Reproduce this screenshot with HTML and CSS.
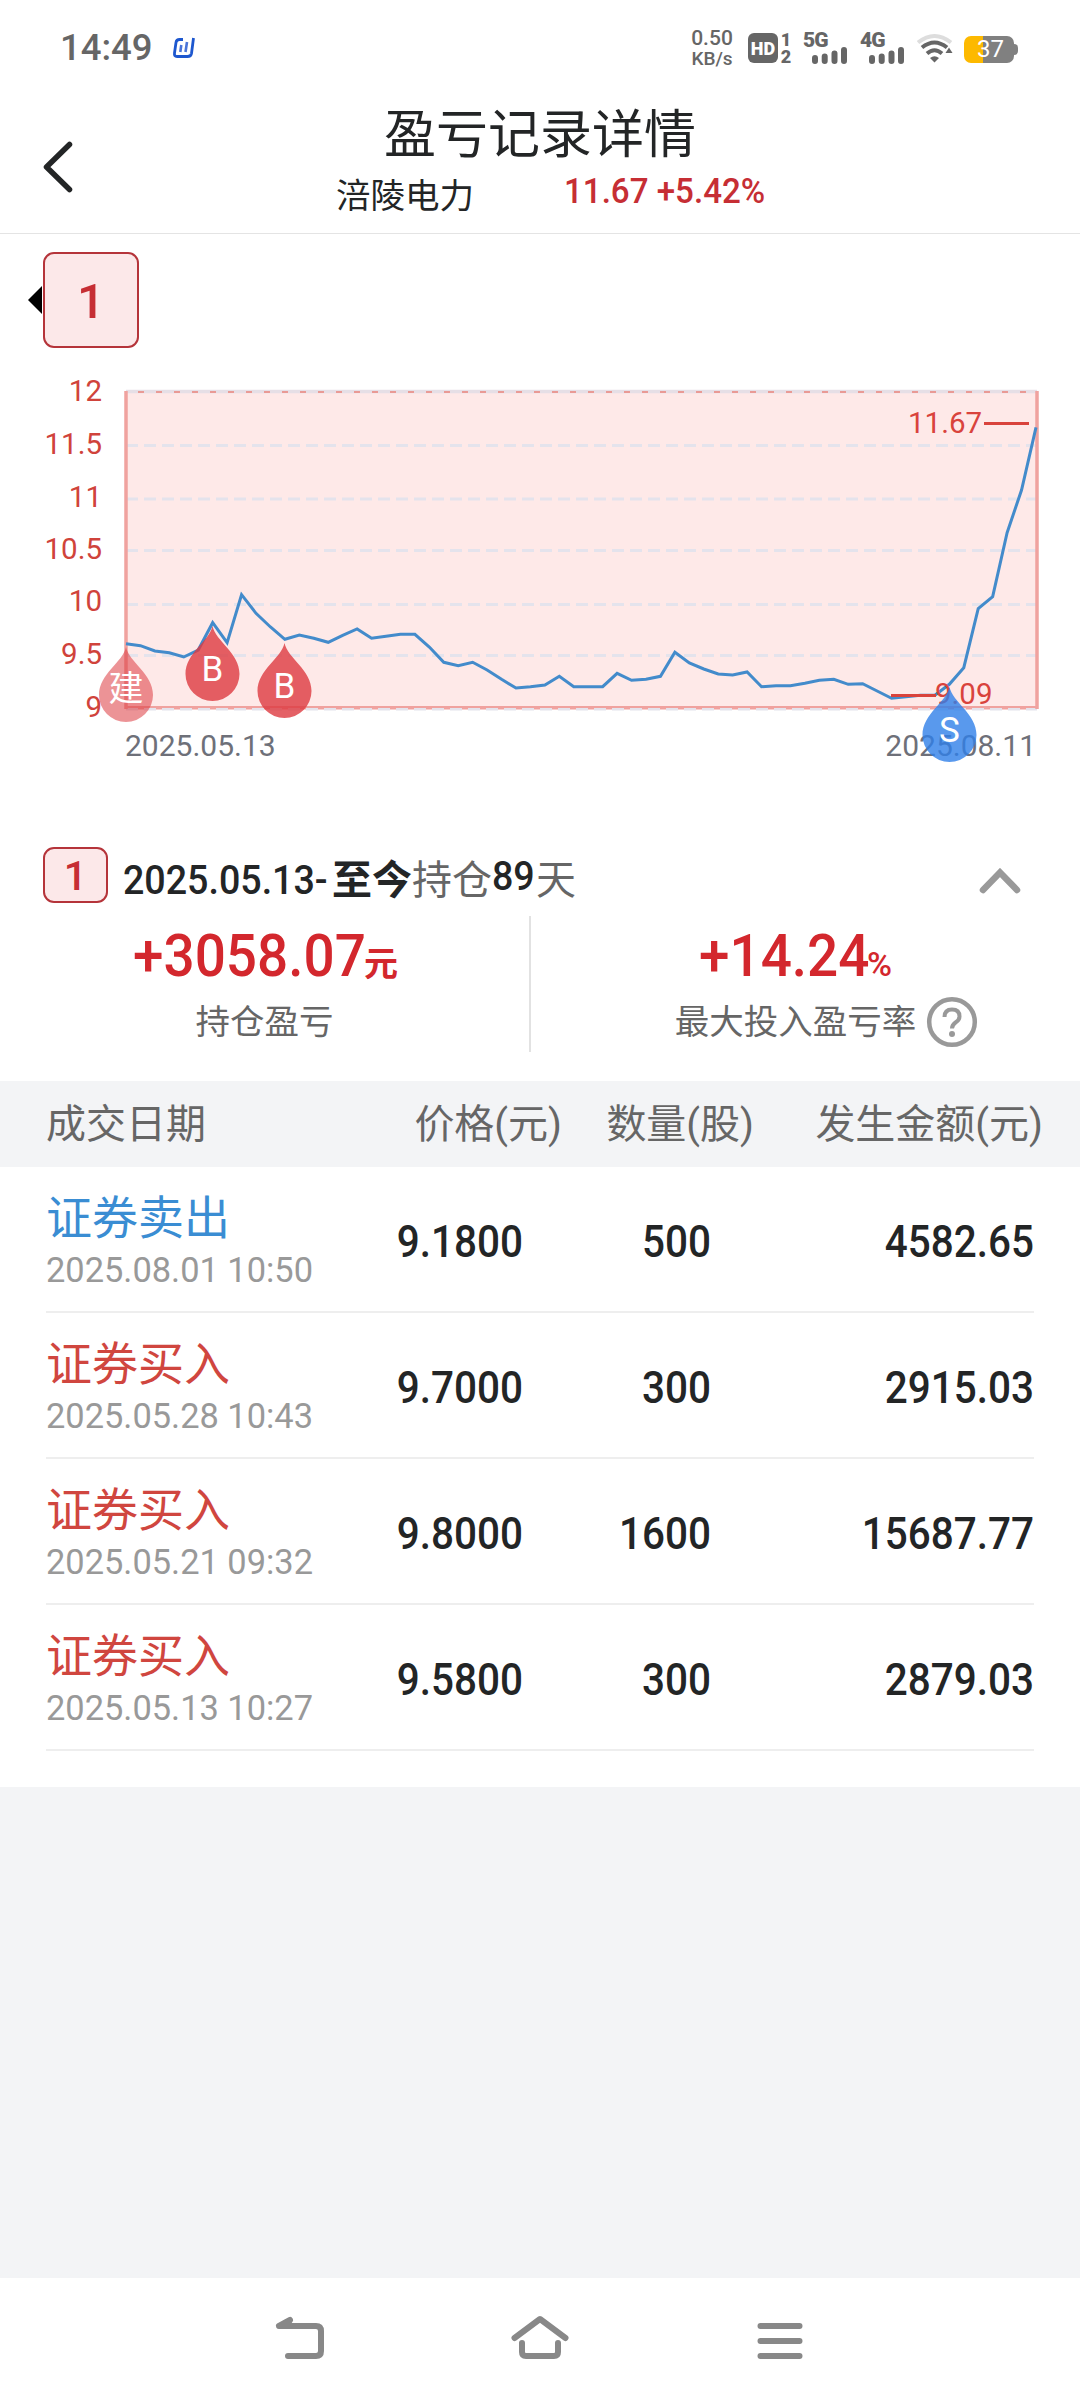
FILE: index.html
```
<!DOCTYPE html>
<html lang="zh-CN">

<head>
  <meta charset="UTF-8">
  <meta name="viewport" content="width=device-width, initial-scale=1.0">
  <title>盈亏记录详情</title>
  <link rel="stylesheet" href="styles.css">
</head>

<body>
  <div class="status">
    <span class="clock">14:49</span>
    <svg class="app" width="24" height="22" viewBox="0 0 24 22" fill="none" stroke="#1d57cf">
      <path d="M11 2.5H7.5Q4.500 2.500 4 5.500L2.500 16Q2 19.500 5 19.500H15.500Q19 19.500 19.500 16.500L21.500 1" stroke-width="2.800" />
      <path d="M8.300 15L9.300 8M13.500 15L15 5" stroke-width="2.600" stroke="#4a74d8" />
    </svg>
    <div class="speed"><b>0.50</b><i>KB/s</i></div>
    <span class="hd">HD</span>
    <div class="sims"><span>1</span><span>2</span></div>
    <div class="signal">
      <span>5G</span>
      <svg width="36" height="17" viewBox="0 0 36 17" stroke="#666" stroke-width="6" stroke-linecap="round">
        <path d="M3 11v3M12.700 9.500V14M22.500 6.500V14M32 3V14" />
      </svg>
    </div>
    <div class="signal">
      <span>4G</span>
      <svg width="36" height="17" viewBox="0 0 36 17" stroke="#666" stroke-width="6" stroke-linecap="round">
        <path d="M3 11v3M12.700 9.500V14M22.500 6.500V14M32 3V14" />
      </svg>
    </div>
    <svg class="wifi" width="38" height="30" viewBox="0 0 38 30" fill="none" stroke="#666" stroke-width="4">
      <path d="M2 9.500Q18.500 -3.500 35 9.500" stroke="#ddd" />
      <path d="M6 14.500Q18.500 4.500 31 14.500" />
      <path d="M11 20.500Q18.500 14 26 20.500" />
      <path d="M14 25Q18.500 21.500 23 25L18.500 29.500Z" fill="#666" stroke="none" />
      <path d="M29.500 20L33 14.500L36.500 20Z" fill="#666" stroke="none" />
    </svg>
    <div class="battery">37</div>
  </div>

  <header>
    <svg class="back" width="32" height="56" viewBox="0 0 32 56" fill="none" stroke="#232526" stroke-width="5.500" stroke-linecap="round" stroke-linejoin="round">
      <path d="M27.500 5.500L4.500 28L27.500 50.500" />
    </svg>
    <h1>盈亏记录详情</h1>
    <div class="stock">
      <span class="name">涪陵电力</span>
      <span class="quote">11.67 +5.42%</span>
    </div>
  </header>

  <div class="pager">
    <span class="arrow"></span>
    <span class="tag big">1</span>
  </div>

  <svg class="chart" width="1080" height="420" viewBox="0 370 1080 420">
    <rect x="126" y="391" width="911" height="317" fill="#fee9e8" />
    <g class="grid">
      <path d="M126 445.500H1037M126 499H1037M126 550.500H1037M126 604.500H1037M126 655.500H1037M126 709H1037" />
    </g>
    <path d="M126 391.500H1037" stroke="#e6dfe6" stroke-width="3.500" />
    <path d="M138 392H1037" stroke="#e99a95" stroke-width="2" stroke-dasharray="6 12" />
    <path d="M126 391V709M1037 391V709" stroke="#f0a29f" stroke-width="3.500" />
    <path d="M126 707H1037" stroke="#f0a29f" stroke-width="2" />
    <path d="M138 708.500H1037" stroke="#f0a29f" stroke-width="2" stroke-dasharray="6 12" />
    <g class="ylabel">
      <text x="102" y="401">12</text>
      <text x="102" y="454">11.5</text>
      <text x="102" y="506.500">11</text>
      <text x="102" y="559">10.5</text>
      <text x="102" y="611">10</text>
      <text x="102" y="664">9.5</text>
      <text x="102" y="716.500">9</text>
    </g>
    <polyline id="line" />
    <g class="mark">
      <path d="M984 423.500H1029M891 695.500H936" />
      <text x="908" y="433">11.67</text>
      <text x="935" y="703.500">9.09</text>
    </g>
    <g class="date">
      <text x="125" y="756">2025.05.13</text>
      <text x="1036" y="756" text-anchor="end">2025.08.11</text>
    </g>
    <defs>
      <path id="drop" d="M0 -48C3 -33 27 -21 27 0A27 27 0 0 1 -27 0C-27 -21 -3 -33 0 -48Z" />
    </defs>
    <g class="drop open" transform="translate(126 695)">
      <use href="#drop" />
      <text y="6">建</text>
    </g>
    <g class="drop" transform="translate(212.500 674)">
      <use href="#drop" />
      <text y="7">B</text>
    </g>
    <g class="drop" transform="translate(284.500 691)">
      <use href="#drop" />
      <text y="7">B</text>
    </g>
    <g class="drop sell" transform="translate(949.500 735)">
      <use href="#drop" />
      <text y="7">S</text>
    </g>
  </svg>

  <section class="summary">
    <div class="period">
      <span class="tag">1</span>
      <div class="range"><span class="from">2025.05.13-</span><b>至今</b>持仓<span class="days">89</span>天</div>
      <svg width="42" height="26" viewBox="0 0 42 26" fill="none" stroke="#999" stroke-width="6.500" stroke-linecap="round">
        <path d="M4 22L21 4.500L38 22" />
      </svg>
    </div>
    <div class="totals">
      <div class="total">
        <div class="value"><span class="amount">+3058.07</span><small>元</small></div>
        <div class="label">持仓盈亏</div>
      </div>
      <div class="total">
        <div class="value rate"><span class="amount">+14.24</span><small>%</small></div>
        <div class="label">最大投入盈亏率
          <svg width="52" height="52" viewBox="0 0 52 52" fill="none" stroke="#999">
            <circle cx="26" cy="26" r="22.800" stroke-width="4.500" />
            <path d="M18.500 21Q18.500 13.500 26 13.500Q33.500 13.500 33.500 20.500Q33.500 24 29.500 26.500Q26 29 26 32.500" stroke-width="4" />
            <circle cx="26" cy="38" r="3" fill="#999" stroke="none" />
          </svg>
        </div>
      </div>
    </div>
  </section>

  <div class="thead">
    <span>成交日期</span>
    <span>价格(元)</span>
    <span>数量(股)</span>
    <span>发生金额(元)</span>
  </div>
  <ul class="trades">
    <li>
      <div class="sell">证券卖出<time>2025.08.01 10:50</time></div>
      <span>9.1800</span>
      <span>500</span>
      <span>4582.65</span>
    </li>
    <li>
      <div class="buy">证券买入<time>2025.05.28 10:43</time></div>
      <span>9.7000</span>
      <span>300</span>
      <span>2915.03</span>
    </li>
    <li>
      <div class="buy">证券买入<time>2025.05.21 09:32</time></div>
      <span>9.8000</span>
      <span>1600</span>
      <span>15687.77</span>
    </li>
    <li>
      <div class="buy">证券买入<time>2025.05.13 10:27</time></div>
      <span>9.5800</span>
      <span>300</span>
      <span>2879.03</span>
    </li>
  </ul>

  <nav>
    <svg width="60" height="50" viewBox="0 0 60 50">
      <path d="M20 6L9 12H46Q51 12 51 17V37Q51 42 46 42H18M9 12L20 11" />
    </svg>
    <svg width="60" height="50" viewBox="0 0 60 50">
      <path d="M4.500 24L30 5L55.500 24M12 29V38Q12 42 16 42H44Q48 42 48 38V29" />
    </svg>
    <svg width="60" height="50" viewBox="0 0 60 50">
      <path d="M10.500 12H49.500M10.500 27H49.500M10.500 42H49.500" />
    </svg>
  </nav>

  <script>
    // 每个交易日收盘价对应的纵坐标
    const closes = [
      643.7, 645.7, 651, 652.7, 657, 650, 622.7, 642.7, 594.7, 613.3, 627, 639.3, 635, 638.3, 642.3, 635.3,
      629, 638.3, 636.3, 634.3, 634.3, 647, 662.3, 665.7, 662.3, 670, 679.3, 688, 686.7, 685, 676.3, 686.7,
      686.7, 686.7, 673.3, 680.3, 679.3, 676.3, 652.3, 663, 669, 674, 675, 672, 686.7, 685.7, 685.7, 683.3,
      680.3, 679.3, 684.3, 683.7, 691, 698.3, 696.7, 695.3, 695.3, 684.3, 667.7, 608.7, 596.7, 532.7, 490, 427.3
    ];
    const step = (1036 - 126) / (closes.length - 1);

    document.querySelector('#line').setAttribute('points',
      closes.map((y, i) => `${126 + i * step},${y}`).join(' '));
  </script>
</body>

</html>
```
FILE: styles.css
```
* {
  box-sizing: border-box;
}

body {
  display: flex;
  flex-direction: column;
  height: 2404px;
  margin: 0;
  background: #f3f4f6;
  color: #232526;
  font-family: Roboto, "Noto Sans CJK SC", sans-serif;
  line-height: 1;
}

svg {
  display: block;
  flex: none;
}

/* 状态栏 */
.status {
  display: flex;
  align-items: center;
  height: 96px;
  padding: 0 61px 0 60px;
  background: #fff;
  color: #666;
  font-weight: 500;
}

.clock {
  font-size: 36.5px;
}

.app {
  margin-left: 19px;
}

.speed {
  width: 48px;
  margin-left: auto;
  margin-right: 12px;
  text-align: center;
}

.speed b,
.speed i {
  display: block;
  font-size: 21px;
  font-style: normal;
  font-weight: 500;
}

.speed i {
  font-size: 19px;
}

.hd {
  width: 30px;
  height: 30px;
  border-radius: 6px;
  background: #666;
  color: #fff;
  font-size: 18px;
  font-weight: 900;
  line-height: 31px;
  text-align: center;
}

.sims {
  width: 12px;
  margin-left: 2px;
  font-size: 18px;
  font-weight: 900;
  line-height: 17px;
  text-align: center;
}

.sims span {
  display: block;
}

.signal {
  width: 46px;
  height: 32px;
  margin-left: 11px;
  font-size: 21px;
  font-weight: 900;
  letter-spacing: -1px;
  line-height: 16px;
}

.signal span {
  display: block;
}

.signal svg {
  margin: -1px 0 0 9px;
}

.wifi {
  margin-left: 10px;
}

.battery {
  position: relative;
  width: 50px;
  height: 27px;
  margin: 3px 5px 0 10px;
  padding-left: 3px;
  border-radius: 7px;
  background: linear-gradient(to right, #fdb900 19px, #808080 19px);
  color: #fff;
  font-size: 24px;
  font-weight: 400;
  line-height: 27px;
  text-align: center;
}

.battery::after {
  content: "";
  position: absolute;
  top: 8px;
  right: -4px;
  width: 4px;
  height: 11px;
  border-radius: 0 4px 4px 0;
  background: #808080;
}

/* 标题 */
header {
  position: relative;
  height: 138px;
  padding-top: 14px;
  border-bottom: 1px solid #e4e4e4;
  background: #fff;
  text-align: center;
}

.back {
  position: absolute;
  top: 43px;
  left: 42px;
}

h1 {
  margin: 0;
  font-size: 52px;
  font-weight: 400;
  line-height: 52px;
}

.stock {
  display: flex;
  padding: 14px 0 0 336px;
  line-height: 40px;
}

.name {
  width: 228px;
  font-size: 34.5px;
  text-align: left;
}

.quote {
  margin-top: -5px;
  color: #c62e34;
  font-size: 34.5px;
  font-weight: 500;
  transform: scaleX(.96);
  transform-origin: left;
}

.pager {
  display: flex;
  align-items: center;
  height: 136px;
  padding: 0 0 4px 28px;
  background: #fff;
}

.arrow {
  border: 14px solid transparent;
  border-right-color: #000;
  border-left: 0;
  margin-right: 1px;
}

.tag {
  width: 65px;
  height: 56px;
  border: 2px solid #b5343a;
  border-radius: 11px;
  background: #fce8e9;
  color: #c62e34;
  font-size: 41px;
  font-weight: 500;
  line-height: 55px;
  text-align: center;
}

.tag.big {
  width: 96px;
  height: 96px;
  font-size: 49px;
  line-height: 96px;
}

/* 走势图 */
.chart {
  background: #fff;
  font-size: 29.5px;
}

.grid path {
  stroke: #e4e3ec;
  stroke-width: 3;
  stroke-dasharray: 12 6;
}

.ylabel {
  fill: #d0433b;
  text-anchor: end;
}

#line {
  fill: none;
  stroke: #438bcb;
  stroke-width: 3;
}

.mark {
  fill: #d9433c;
}

.mark path {
  stroke: #d9433c;
  stroke-width: 3;
}

.date {
  fill: #6e7079;
  font-size: 30px;
}

.drop use {
  fill: #dd3a40;
  fill-opacity: .8;
}

.drop.open use {
  fill-opacity: .55;
}

.drop.sell use {
  fill: #3080e8;
}

.drop text {
  fill: #fff;
  font-size: 35px;
  text-anchor: middle;
}

/* 持仓汇总 */
.summary {
  height: 291px;
  padding-top: 57px;
  background: #fff;
}

.period {
  display: flex;
  align-items: center;
  height: 56px;
  padding: 0 59px 0 43px;
}

.period svg {
  margin-top: 12px;
}

.range {
  display: flex;
  flex: 1;
  margin: 12px 0 0 15px;
  color: #666;
  font-size: 40px;
  line-height: 60px;
}

.range b {
  color: #232526;
}

.from,
.days {
  color: #232526;
  font-weight: 500;
  transform: scaleX(.94);
  transform-origin: left;
}

.from {
  width: 209px;
}

.days {
  width: 44px;
  margin-top: -4px;
}

.totals {
  display: flex;
  height: 136px;
  margin-top: 13px;
}

.total {
  flex: 1;
  padding-top: 10px;
}

.total:first-child {
  flex: none;
  width: 531px;
  border-right: 2px solid #e2e2e2;
}

.value {
  display: flex;
  align-items: baseline;
  height: 60px;
  padding-left: 133px;
  color: #d3272d;
  font-size: 59px;
  font-weight: 500;
}

.value.rate {
  padding-left: 168px;
}

.amount {
  width: 231px;
  transform: scaleX(.93);
  transform-origin: left;
}

.rate .amount {
  width: 168px;
}

.value small {
  font-size: 34px;
  font-weight: 700;
}

.rate small {
  font-weight: 500;
}

.label {
  display: flex;
  align-items: center;
  justify-content: center;
  height: 60px;
  margin-top: 6px;
  color: #666;
  font-size: 34.5px;
}

.rate + .label {
  padding-left: 42px;
}

.label svg {
  margin-left: 10px;
}

/* 成交明细 */
.thead,
.trades li {
  display: grid;
  grid-template-columns: 320px 157px 188px 1fr;
  align-items: center;
  text-align: right;
}

.thead {
  grid-template-columns: 320px 196px 192px 1fr;
  height: 86px;
  padding: 2px 37px 0 46px;
  color: #666;
  font-size: 40px;
}

.thead span:first-child,
.trades div {
  text-align: left;
}

.trades {
  height: 620px;
  margin: 0;
  padding: 0 46px;
  background: #fff;
  list-style: none;
}

.trades li {
  height: 146px;
  padding-top: 7px;
  border-bottom: 2px solid #eee;
  font-size: 43.5px;
  font-weight: 500;
}

.trades span {
  transform: scaleX(.93);
  transform-origin: right;
}

.trades div {
  font-size: 46px;
  font-weight: 400;
  line-height: 56px;
}

.trades time {
  display: block;
  color: #999;
  font-size: 35px;
  line-height: 49px;
  transform: scaleX(.983);
  transform-origin: left;
}

.sell {
  color: #3a8dd3;
}

.buy {
  color: #d0463f;
}

/* 系统导航 */
nav {
  display: flex;
  justify-content: center;
  gap: 180px;
  height: 126px;
  margin-top: auto;
  padding-top: 36px;
  background: #fff;
}

nav path {
  fill: none;
  stroke: #888;
  stroke-width: 6;
  stroke-linecap: round;
  stroke-linejoin: round;
}
```
